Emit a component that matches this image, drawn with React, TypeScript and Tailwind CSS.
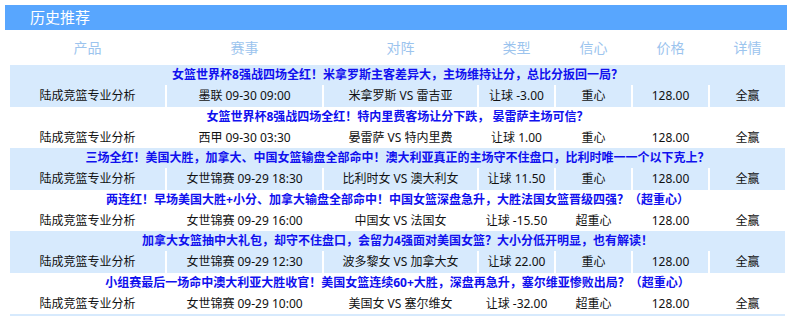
const columns = ["产品", "赛事", "对阵", "类型", "信心", "价格", "详情"];

interface Tip {
  title: string;
  product: string;
  match: string;
  teams: string;
  kind: string;
  confidence: string;
  price: string;
  result: string;
}

const tips: Tip[] = [
  {
    title: "女篮世界杯8强战四场全红！米拿罗斯主客差异大，主场维持让分，总比分扳回一局？",
    product: "陆成竞篮专业分析",
    match: "墨联 09-30 09:00",
    teams: "米拿罗斯 VS 雷吉亚",
    kind: "让球 -3.00",
    confidence: "重心",
    price: "128.00",
    result: "全赢",
  },
  {
    title: "女篮世界杯8强战四场全红！特内里费客场让分下跌， 晏雷萨主场可信？",
    product: "陆成竞篮专业分析",
    match: "西甲 09-30 03:30",
    teams: "晏雷萨 VS 特内里费",
    kind: "让球 1.00",
    confidence: "重心",
    price: "128.00",
    result: "全赢",
  },
  {
    title: "三场全红！美国大胜，加拿大、中国女篮输盘全部命中！澳大利亚真正的主场守不住盘口，比利时唯一一个以下克上？",
    product: "陆成竞篮专业分析",
    match: "女世锦赛 09-29 18:30",
    teams: "比利时女 VS 澳大利女",
    kind: "让球 11.50",
    confidence: "重心",
    price: "128.00",
    result: "全赢",
  },
  {
    title: "两连红！早场美国大胜+小分、加拿大输盘全部命中！中国女篮深盘急升，大胜法国女篮晋级四强？（超重心）",
    product: "陆成竞篮专业分析",
    match: "女世锦赛 09-29 16:00",
    teams: "中国女 VS 法国女",
    kind: "让球 -15.50",
    confidence: "超重心",
    price: "128.00",
    result: "全赢",
  },
  {
    title: "加拿大女篮抽中大礼包，却守不住盘口，会留力4强面对美国女篮？大小分低开明显，也有解读！",
    product: "陆成竞篮专业分析",
    match: "女世锦赛 09-29 12:30",
    teams: "波多黎女 VS 加拿大女",
    kind: "让球 22.00",
    confidence: "重心",
    price: "128.00",
    result: "全赢",
  },
  {
    title: "小组赛最后一场命中澳大利亚大胜收官！美国女篮连续60+大胜，深盘再急升，塞尔维亚惨败出局？（超重心）",
    product: "陆成竞篮专业分析",
    match: "女世锦赛 09-29 10:00",
    teams: "美国女 VS 塞尔维女",
    kind: "让球 -32.00",
    confidence: "超重心",
    price: "128.00",
    result: "全赢",
  },
];

const gridCols = "grid grid-cols-[155px_155px_153px_75px_75px_75px_75px] gap-x-[2px]";

function TipGroup({ tip, shaded }: { tip: Tip; shaded: boolean }) {
  const bg = shaded ? "bg-[#d7eafd]" : "bg-white";
  const cells = [tip.product, tip.match, tip.teams, tip.kind, tip.confidence, tip.price, tip.result];

  return (
    <div>
      <div className={`flex h-[20px] items-center justify-center whitespace-nowrap text-[12px] font-bold text-[#1010ee] ${bg}`}>
        {tip.title}
      </div>
      <div className={`${gridCols} bg-white ${shaded ? "h-[22px]" : "h-[21px]"}`}>
        {cells.map((text, i) => (
          <div key={i} className={`flex items-center justify-center whitespace-nowrap text-[12px] text-[#111] ${bg}`}>
            {text}
          </div>
        ))}
      </div>
    </div>
  );
}

export default function App() {
  return (
    <div
      className="h-[316px] w-[787px] overflow-hidden bg-white pt-[5px]"
      style={{ fontFamily: '"Noto Sans", "Noto Sans CJK SC", sans-serif' }}
    >
      {/* Section header */}
      <div className="ml-[5px] flex h-[25px] items-center bg-[#58a6fe] pl-[25px] text-[15px] text-white">
        历史推荐
      </div>

      {/* Column titles */}
      <div className={`${gridCols} ml-[10px] h-[35px] w-[775px]`}>
        {columns.map((c) => (
          <div key={c} className="flex items-center justify-center text-[14px] text-[#9cc4ee]">
            {c}
          </div>
        ))}
      </div>

      {/* Rows */}
      <div className="ml-[10px] w-[775px]">
        {tips.map((tip, i) => (
          <TipGroup key={i} tip={tip} shaded={i % 2 === 0} />
        ))}
        <div className="h-[20px] bg-[#d7eafd]" />
      </div>
    </div>
  );
}
